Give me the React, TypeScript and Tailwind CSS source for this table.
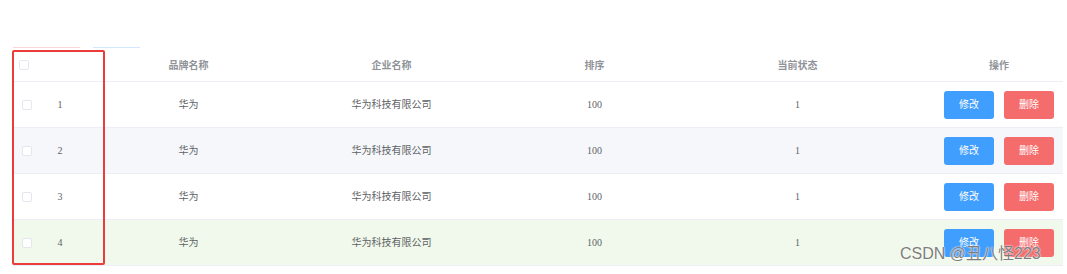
import React from "react";

const rows = [
  { id: 1, bg: "bg-white" },
  { id: 2, bg: "bg-[#f5f7fa]" },
  { id: 3, bg: "bg-white" },
  { id: 4, bg: "bg-[#f0f9eb]" },
];

const cols = "grid grid-cols-[20px_54px_203px_203px_203px_203px_164px]";

function Checkbox({ className = "" }: { className?: string }) {
  return (
    <span
      className={`block h-[10px] w-[10px] rounded-[2px] border border-[#e4e7ed] bg-white ${className}`}
    />
  );
}

export default function App() {
  return (
    <div
      className="relative h-[274px] w-[1067px] overflow-hidden bg-white text-[10px] text-[#606266]"
      style={{ fontFamily: '"Liberation Serif", "Noto Sans CJK SC", serif' }}
    >
      {/* bottoms of the toolbar buttons above the table */}
      <div className="flex pl-[13px] pt-[47px]">
        <div className="h-px w-[67px] bg-[#fbd5d5]" />
        <div className="ml-[13px] h-px w-[47px] bg-[#d3e7ff]" />
      </div>

      <div className="ml-[13px] w-[1050px]">
        <div
          className={`${cols} h-[34px] items-center border-b border-[#ebeef5] font-bold text-[#909399]`}
          style={{ fontFamily: '"Noto Sans CJK SC", sans-serif' }}
        >
          <div className="pl-[6px]">
            <Checkbox />
          </div>
          <div />
          <div className="text-center">品牌名称</div>
          <div className="text-center">企业名称</div>
          <div className="text-center">排序</div>
          <div className="text-center">当前状态</div>
          <div className="pl-[36px] text-center">操作</div>
        </div>

        {rows.map((r) => (
          <div
            key={r.id}
            className={`${cols} h-[46px] items-center border-b border-[#ebeef5] ${r.bg}`}
          >
            <div className="pl-[9px]">
              <Checkbox />
            </div>
            <div className="text-center">{r.id}</div>
            <div className="text-center">华为</div>
            <div className="text-center">华为科技有限公司</div>
            <div className="text-center">100</div>
            <div className="text-center">1</div>
            <div className="flex justify-center gap-[10px] pl-[36px]">
              <button className="h-[28px] w-[50px] rounded-[3px] bg-[#409eff] text-white">
                修改
              </button>
              <button className="h-[28px] w-[50px] rounded-[3px] bg-[#f56c6c] text-white">
                删除
              </button>
            </div>
          </div>
        ))}
      </div>

      {/* annotation box */}
      <div className="absolute left-[12px] top-[50px] h-[215px] w-[93px] rounded-[2px] border-2 border-[#ec3b3b]" />

      <div
        className="absolute left-[900px] top-[244px] text-[16px] leading-[20px] text-[#7d7d7d]"
        style={{
          fontFamily: '"Liberation Sans", "Noto Sans CJK SC", sans-serif',
          textShadow: "0 0 2px #fff, 0 0 1px #fff",
        }}
      >
        CSDN @丑八怪223
      </div>
    </div>
  );
}
